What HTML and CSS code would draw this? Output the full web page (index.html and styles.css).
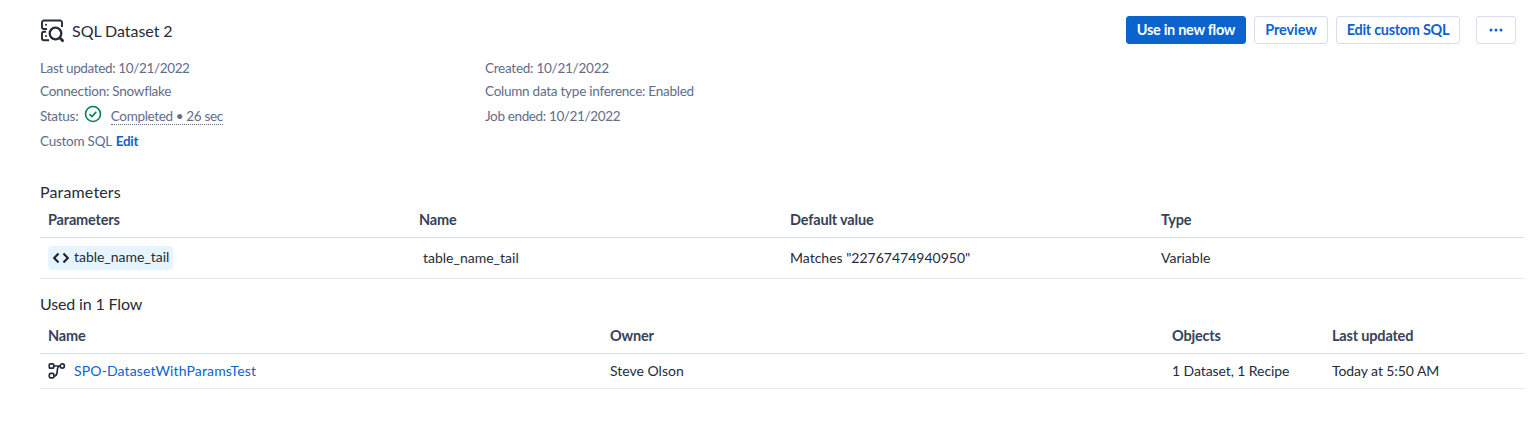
FILE: index.html
```html
<!DOCTYPE html>
<html lang="en">
<head>
    <meta charset="UTF-8">
    <meta name="viewport" content="width=device-width, initial-scale=1.0">
    <title>SQL Dataset 2</title>
    <link rel="stylesheet" href="styles.css">
</head>
<body>
    <!-- Header -->
    <header class="header">
        <div class="title">
            <svg class="dataset-icon" width="24" height="24" viewBox="0 0 24 24" fill="none" stroke="#252c38" stroke-width="1.900">
                <path d="M22 8V3.500a2 2 0 0 0-2-2H4a2 2 0 0 0-2 2V8a2 2 0 0 0 2 2h3"/>
                <path d="M6 12.800H4a2 2 0 0 0-2 2v4.500a2 2 0 0 0 2 2h5"/>
                <circle cx="15.500" cy="14.500" r="5.800" stroke-width="2.300"/>
                <path d="M19.500 18.500l4 4" stroke-width="2.800"/>
                <circle cx="6" cy="5.800" r="1" fill="#252c38" stroke="none"/>
                <circle cx="6" cy="17" r="1" fill="#252c38" stroke="none"/>
            </svg>
            <h1>SQL Dataset 2</h1>
        </div>
        <div class="actions">
            <button class="btn primary use-btn">Use in new flow</button>
            <button class="btn preview-btn">Preview</button>
            <button class="btn edit-btn">Edit custom SQL</button>
            <button class="btn more-btn" aria-label="More">
                <svg width="14" height="4" viewBox="0 0 14 4" fill="#0b63ce">
                    <circle cx="2" cy="2" r="1.500"/>
                    <circle cx="7" cy="2" r="1.500"/>
                    <circle cx="12" cy="2" r="1.500"/>
                </svg>
            </button>
        </div>
    </header>

    <!-- Dataset details -->
    <section class="details">
        <div class="column">
            <p class="dates">Last updated: 10/21/2022</p>
            <p>Connection: Snowflake</p>
            <p class="status">Status:
                <svg class="check-icon" width="18" height="18" viewBox="0 0 18 18" fill="none" stroke="#008155" stroke-width="1.600">
                    <circle cx="9" cy="9" r="7.500"/>
                    <path d="M5.500 9.200l2.400 2.300 4.400-4.600"/>
                </svg>
                <span class="status-text">Completed • 26 sec</span>
            </p>
            <p>Custom SQL <a href="#" class="edit-link">Edit</a></p>
        </div>
        <div class="column">
            <p>Created: 10/21/2022</p>
            <p>Column data type inference: Enabled</p>
            <p class="status dates">Job ended: 10/21/2022</p>
        </div>
    </section>

    <!-- Parameters -->
    <section class="parameters">
        <h2>Parameters</h2>
        <div class="row head">
            <div>Parameters</div>
            <div>Name</div>
            <div>Default value</div>
            <div>Type</div>
        </div>
        <div class="row">
            <div class="tag-cell">
                <span class="tag">
                    <svg width="18" height="12" viewBox="0 0 18 12" fill="none" stroke="#1a212d" stroke-width="2.100">
                        <path d="M6.500 1.500l-4.300 4.500 4.300 4.500M11.500 1.500l4.300 4.500-4.300 4.500"/>
                    </svg>
                    <span class="tag-text">table_name_tail</span>
                </span>
            </div>
            <div class="param-name">table_name_tail</div>
            <div>Matches "22767474940950"</div>
            <div>Variable</div>
        </div>
    </section>

    <!-- Flows -->
    <section class="flows">
        <h2 class="flows-title">Used in 1 Flow</h2>
        <div class="row head">
            <div>Name</div>
            <div>Owner</div>
            <div>Objects</div>
            <div>Last updated</div>
        </div>
        <div class="row">
            <div class="flow-name">
                <svg class="flow-icon" width="18" height="18" viewBox="0 0 18 18" fill="none" stroke="#252c38" stroke-width="1.700">
                    <rect x="1.300" y="1.800" width="4.400" height="4.400" rx="0.800"/>
                    <circle cx="14.300" cy="4" r="2.100"/>
                    <rect x="1.300" y="11.300" width="4.600" height="4.600" rx="1.400"/>
                    <path d="M5.700 4h6.600M5.900 14c3.400 0 3.100-2.600 3.300-5 .2-2.500.3-5 2.900-5"/>
                </svg>
                <a href="#">SPO-DatasetWithParamsTest</a>
            </div>
            <div>Steve Olson</div>
            <div class="objects">1 Dataset, 1 Recipe</div>
            <div class="objects">Today at 5:50 AM</div>
        </div>
    </section>
</body>
</html>
```
FILE: styles.css
```css
/* General styles */
* {
    margin: 0;
    padding: 0;
    box-sizing: border-box;
}

body {
    background: #fff;
    color: #252c38;
    font-family: Lato, sans-serif;
    font-size: 14px;
    padding: 16px 9px 0 40px;
}

a {
    color: #0b63ce;
    text-decoration: none;
}

h1,
h2 {
    font-size: 16px;
    font-weight: 400;
    line-height: 20px;
}

h1 {
    letter-spacing: -0.05px;
}

h2 {
    letter-spacing: 0.15px;
}

/* Header */
.header {
    display: flex;
    justify-content: space-between;
    height: 41px;
    padding-right: 8px;
}

.title {
    display: flex;
    align-items: center;
    gap: 8px;
    height: 30px;
}

.dataset-icon {
    margin-top: -1px;
}

.actions {
    display: flex;
    gap: 8px;
}

.btn {
    height: 28px;
    padding-bottom: 2px;
    background: #fff;
    border: 1px solid #d6def0;
    border-radius: 3px;
    color: #0b63ce;
    font-family: inherit;
    font-size: 14.5px;
    font-weight: 700;
    letter-spacing: -0.3px;
    white-space: nowrap;
}

.btn.primary {
    background: #0b63ce;
    border-color: #0b63ce;
    color: #fff;
}

.use-btn {
    width: 120px;
}

.preview-btn {
    width: 74px;
    letter-spacing: -0.1px;
}

.edit-btn {
    width: 124px;
}

.more-btn {
    display: flex;
    align-items: center;
    justify-content: center;
    width: 40px;
    margin-left: 8px;
    padding: 0;
}

/* Details */
.details {
    display: grid;
    grid-template-columns: 445px 1fr;
    height: 125px;
    color: #5f6d8a;
    font-size: 13.5px;
    letter-spacing: -0.25px;
}

.details p {
    height: 23px;
    line-height: 23px;
}

.details .dates {
    letter-spacing: -0.36px;
}

.details .status {
    display: flex;
    height: 27px;
    line-height: 27px;
}

.check-icon {
    margin: 2px 9px 0 5.5px;
}

.status-text {
    height: 16px;
    margin-top: 6px;
    border-bottom: 1px dotted #5f6d8a;
    line-height: 15px;
    letter-spacing: -0.35px;
}

.edit-link {
    margin-left: 1px;
    font-weight: 700;
}

/* Tables */
.row {
    display: grid;
    align-items: center;
    padding: 0 0 2px 8px;
    border-bottom: 1px solid #e4e8f3;
}

.head {
    border-bottom-color: #d3dcec;
    color: #36425a;
    font-size: 14.5px;
    font-weight: 700;
    letter-spacing: -0.18px;
}

.parameters {
    height: 112px;
}

.parameters .row {
    grid-template-columns: 371px 371px 371px 1fr;
    height: 41px;
}

.parameters .head {
    height: 36px;
    padding-bottom: 1px;
}

.param-name {
    padding-left: 4px;
}

.tag-cell {
    display: flex;
    padding-top: 2px;
}

.tag {
    display: flex;
    align-items: center;
    gap: 4px;
    width: 125px;
    height: 24px;
    padding-left: 4px;
    background: #e6f4ff;
    border-radius: 4px;
}

.tag-text {
    padding-bottom: 3px;
    letter-spacing: -0.03px;
}

.flows .row {
    grid-template-columns: 562px 562px 160px 1fr;
    height: 35px;
}

.flows .head {
    height: 40px;
    padding: 3px 0 0 8px;
}

.flows-title {
    letter-spacing: -0.15px;
}

.flow-name {
    display: flex;
    align-items: center;
    gap: 8px;
}

.flow-icon {
    margin-top: 1px;
}

.flow-name a {
    letter-spacing: 0.14px;
}

.objects {
    letter-spacing: -0.08px;
}
```
